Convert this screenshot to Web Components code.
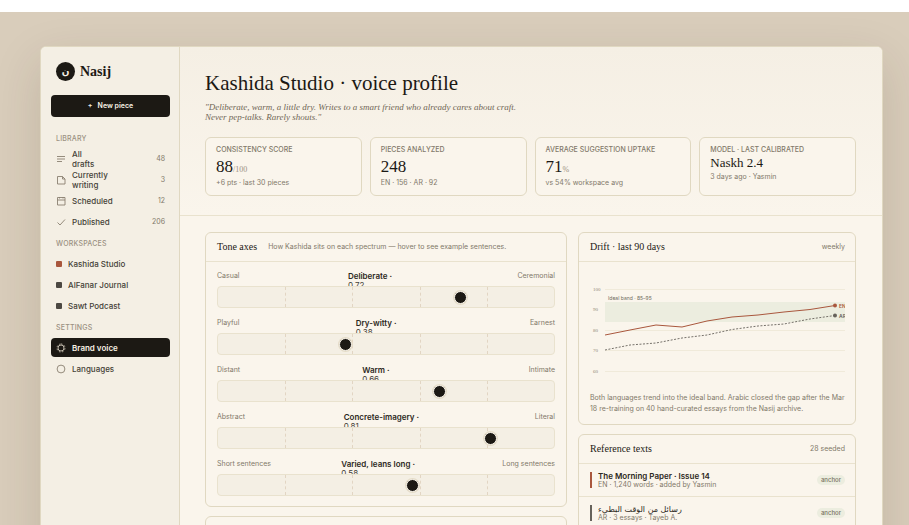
<!DOCTYPE html>
<html lang="en">
<head>
<meta charset="utf-8">
<title>Nasij · Brand voice</title>
<style>
  :root {
    --ink: #1c1914; --text: #453f37; --muted: #82796a; --faint: #9b9182;
    --paper: #faf5ec; --cream: #f4efe4; --line: #e0d8c1; --line-soft: #e9e2ce;
    --rust: #a9573d; --slate: #66625b; --sage: #eceddf;
    --serif: "Liberation Serif", "Times New Roman", serif;
  }
  html { background: #fff; }
  body { margin: 0; font: 8px/10px Inter, "DejaVu Sans", sans-serif; color: var(--text); }
</style>
</head>
<body>
<voice-app></voice-app>
<script>
function define(name, html, setup) {
  const template = document.createElement('template');
  template.innerHTML = html;
  customElements.define(name, class extends HTMLElement {
    connectedCallback() {
      if (this.shadowRoot) return;
      const root = this.attachShadow({ mode: 'open' });
      root.append(template.content.cloneNode(true));
      if (setup) setup(this, root);
    }
  });
}

const icons = {
  lines: '<path d="M1 2.5h8M1 5h8M1 7.5h5"/>',
  page: '<path d="M1.5 1.5h5l2.500 2.500v5h-7.500zM6.500 1.500v2.500h2.500"/>',
  calendar: '<path d="M1.500 1.500h7.500v7.500h-7.500zM1.500 4h7.500M3.500 1v1.500M7 1v1.500"/>',
  check: '<path d="M1.500 5.500l2.500 2.500 5-5.500"/>',
  gear: '<circle cx="5" cy="5" r="3"/><path stroke-dasharray="1.500 1.720" d="M5 1a4 4 0 1 1 0 8a4 4 0 1 1 0-8"/>',
  ring: '<circle cx="5" cy="5" r="3.900"/>'
};

define('nav-item', `
<style>
  :host { display: block; }
  a { display: flex; align-items: center; gap: 6px; height: 19px; padding: 0 5px; border-radius: 4px;
      color: var(--text); text-decoration: none; font-weight: 500; box-sizing: border-box; }
  svg { width: 10px; height: 10px; flex: none; fill: none; stroke: #8a8070; stroke-width: .9; }
  .dot { width: 6px; height: 6px; border-radius: 1px; flex: none; background: var(--dot, #4c4842); }
  .count { margin-left: auto; font-size: 7px; font-weight: 400; color: var(--muted); }
  :host([current]) a { background: var(--ink); color: #f8f1e5; font-weight: 600; }
  :host([current]) svg { stroke: #cfc7b8; }
</style>
<a href="#"><span class="icon" style="display:contents"></span><span class="label"><slot></slot></span><span class="count"></span></a>`,
(host, root) => {
  const icon = host.getAttribute('icon');
  root.querySelector('.icon').innerHTML = icon ? `<svg viewBox="0 0 10 10" aria-hidden="true">${icons[icon]}</svg>` : '<span class="dot"></span>';
  const count = host.getAttribute('count');
  if (count) root.querySelector('.count').textContent = count;
  else root.querySelector('.count').remove();
  if (host.hasAttribute('current')) root.querySelector('a').setAttribute('aria-current', 'page');
});

define('nav-group', `
<style>
  :host { display: block; }
  h2 { margin: 0 0 6px; padding: 0 5px; font-size: 7px; line-height: 8px; font-weight: 500; letter-spacing: .03em; text-transform: uppercase; color: var(--faint); }
  div { display: flex; flex-direction: column; gap: 2px; }
</style>
<h2></h2><div><slot></slot></div>`,
(host, root) => { root.querySelector('h2').textContent = host.getAttribute('heading'); });

define('side-bar', `
<style>
  :host { display: block; padding: 15px 9px 15px 10px; background: var(--cream); border-right: 1px solid var(--line); }
  .brand { display: flex; align-items: center; gap: 5px; padding: 0 5px; margin-bottom: 14px; }
  .logo { width: 19px; height: 19px; border-radius: 50%; background: var(--ink); color: #f8f1e5; display: grid; place-items: center; font: 700 9px/12px "DejaVu Sans", sans-serif; }
  .name { font: 700 14px/18px var(--serif); color: var(--ink); }
  button { display: block; width: 100%; height: 22px; border: 0; border-radius: 4px; background: var(--ink); color: #f8f1e5; font: 600 7px/10px Inter, sans-serif; margin: 0 0 18px; padding: 0; }
  button span { margin-right: 5px; }
  nav { display: flex; flex-direction: column; gap: 9px; }
</style>
<div class="brand"><span class="logo" lang="ar">ن</span><span class="name">Nasij</span></div>
<button type="button"><span>+</span>New piece</button>
<nav>
  <nav-group heading="Library">
    <nav-item icon="lines" count="48">All<br>drafts</nav-item>
    <nav-item icon="page" count="3">Currently<br>writing</nav-item>
    <nav-item icon="calendar" count="12">Scheduled</nav-item>
    <nav-item icon="check" count="206">Published</nav-item>
  </nav-group>
  <nav-group heading="Workspaces">
    <nav-item style="--dot: var(--rust)">Kashida Studio</nav-item>
    <nav-item>AlFanar Journal</nav-item>
    <nav-item>Sawt Podcast</nav-item>
  </nav-group>
  <nav-group heading="Settings">
    <nav-item icon="gear" current>Brand voice</nav-item>
    <nav-item icon="ring">Languages</nav-item>
  </nav-group>
</nav>`);

define('stat-card', `
<style>
  :host { display: block; box-sizing: border-box; min-height: 59px; padding: 8px 10px; border: 1px solid var(--line); border-radius: 6px; background: var(--paper); }
  .label { font-size: 7px; line-height: 8px; font-weight: 500; text-transform: uppercase; color: var(--muted); white-space: nowrap; }
  .value { margin: 4px 0 2px; font: 17px/18px var(--serif); color: var(--ink); }
  .value small { font-size: 8px; line-height: 8px; color: var(--faint); }
  :host([text]) .value { margin: 1px 0; font-size: 13px; line-height: 16px; }
  .note { font-size: 7px; line-height: 9px; color: var(--muted); }
</style>
<div class="label"></div><div class="value"><slot></slot><small></small></div><div class="note"></div>`,
(host, root) => {
  root.querySelector('.label').textContent = host.getAttribute('label');
  root.querySelector('small').textContent = host.getAttribute('unit') || '';
  root.querySelector('.note').textContent = host.getAttribute('note');
});

define('panel-card', `
<style>
  :host { display: block; border: 1px solid var(--line); border-radius: 6px; background: var(--paper); }
  header { display: flex; align-items: center; gap: 11px; height: 28px; padding: 0 10px 0 11px; border-bottom: 1px solid var(--line-soft); }
  h2 { margin: 0; font: 10px/12px var(--serif); color: var(--ink); }
  .side { font-size: 7px; color: var(--muted); }
  :host([end]) .side { margin-left: auto; }
</style>
<header><h2></h2><span class="side"></span></header><slot></slot>`,
(host, root) => {
  root.querySelector('h2').textContent = host.getAttribute('heading');
  root.querySelector('.side').textContent = host.getAttribute('side');
});

define('tone-axis', `
<style>
  :host { display: block; }
  .ends { display: flex; justify-content: space-between; height: 15px; font-size: 7px; color: var(--muted); }
  label { color: var(--text); font-size: 8px; line-height: 9px; }
  label strong { display: block; padding-right: 17px; font-weight: 600; line-height: 10px; color: #2c2822; }
  .stack { position: relative; display: grid; height: 20px; border: 1px solid var(--line-soft); border-radius: 4px; background: var(--cream); }
  .cells, input { grid-area: 1 / 1; }
  .cells { display: grid; grid-template-columns: repeat(5, 1fr); }
  .cells i + i { border-left: 1px dashed #e2d5c3; }
  input { appearance: none; margin: 0 -7px; height: 20px; background: none; }
  input::-webkit-slider-thumb { appearance: none; width: 13px; height: 13px; border-radius: 50%; box-sizing: border-box; background: var(--ink); border: 1px solid #faf5ec; box-shadow: 0 0 0 1px #e5dcc8; }
</style>
<div class="ends"><span class="low"></span><label for="tone"><strong></strong><span class="num"></span></label><span class="high"></span></div>
<div class="stack"><div class="cells"><i></i><i></i><i></i><i></i><i></i></div><input id="tone" type="range" min="0" max="1" step="0.01"></div>`,
(host, root) => {
  const value = host.getAttribute('value');
  root.querySelector('.low').textContent = host.getAttribute('low');
  root.querySelector('.high').textContent = host.getAttribute('high');
  root.querySelector('strong').textContent = host.getAttribute('tone') + ' ·';
  root.querySelector('.num').textContent = value;
  root.querySelector('input').value = value;
});

define('drift-chart', `
<style>
  :host { display: block; padding: 11px 10px 10px 11px; }
  svg { display: block; width: 100%; }
  text { font-family: Inter, sans-serif; }
  .axis text { font: 5px var(--serif); fill: #8f8575; }
  p { margin: 11px 0 0; font-size: 7px; line-height: 11px; color: var(--muted); }
</style>
<svg viewBox="0 0 255 108" role="img" aria-label="Weekly drift for English and Arabic">
  <rect x="15" y="29" width="240" height="20" fill="#eceddf"/>
  <g class="axis">
    <path d="M15 16.500h240M15 57.500h240M15 77.500h240M15 98.500h240" stroke="#f0eada" fill="none"/>
    <text x="3" y="18">100</text><text x="3" y="38">90</text><text x="3" y="59">80</text><text x="3" y="79">70</text><text x="3" y="100">60</text>
  </g>
  <text x="18" y="27" font-size="5" fill="#6f6b5c">Ideal band · 85–95</text>
  <polyline points="15,62 40,57 66,52 92,54 117,48 142,44 168,42 194,39 220,36.500 245,32.500" fill="none" stroke="#a9573d"/>
  <polyline points="15,77 40,72 66,70 92,65 117,62 142,56.500 168,53 194,51 220,46 245,42.500" fill="none" stroke="#66625b" stroke-dasharray="2 1.500" stroke-width=".9"/>
  <circle cx="245" cy="32.500" r="2" fill="#a9573d"/><circle cx="245" cy="42.500" r="2" fill="#66625b"/>
  <text x="249" y="34.500" font-size="5" font-weight="600" fill="#a9573d">EN</text><text x="249" y="44.500" font-size="5" font-weight="600" fill="#66625b">AR</text>
</svg>
<p><slot></slot></p>`);

define('reference-row', `
<style>
  :host { display: flex; align-items: center; gap: 6px; height: 32px; padding: 0 10px 0 11px; border-bottom: 1px solid var(--line-soft); }
  .bar { width: 2px; height: 16px; background: var(--bar, var(--slate)); }
  .title { font-weight: 600; line-height: 9px; color: #2c2822; }
  .title ::slotted([lang="ar"]) { font: 400 8px/9px "DejaVu Sans", sans-serif; }
  .meta { font-size: 7px; line-height: 8px; color: var(--muted); }
  .tag { margin-left: auto; padding: 0 4px; border-radius: 5px; background: var(--sage); font-size: 6px; line-height: 10px; font-weight: 500; color: #777060; }
</style>
<span class="bar"></span><div><div class="title"><slot></slot></div><div class="meta"></div></div><span class="tag">anchor</span>`,
(host, root) => { root.querySelector('.meta').textContent = host.getAttribute('meta'); });

define('voice-app', `
<style>
  :host { display: block; box-sizing: border-box; height: calc(100vh - 12px); margin-top: 12px; padding: 34px 26px 0 40px; overflow: hidden; background: #d9cdbb; }
  .window { display: grid; grid-template-columns: 139px 1fr; min-height: 100vh; border: 1px solid var(--line); border-radius: 6px; background: var(--paper); box-shadow: 0 16px 48px rgb(60 45 30 / .15); overflow: hidden; }
  .intro { padding: 22px 26px 19px 25px; border-bottom: 1px solid var(--line-soft); background: linear-gradient(#f5efe4, #faf5ec); }
  h1 { margin: 0; font: 21px/28px var(--serif); color: var(--ink); }
  .quote { margin: 5px 0 15px; font: italic 9px/10px var(--serif); color: #716756; }
  .stats { display: grid; grid-template-columns: repeat(4, 1fr); gap: 8px; }
  .panels { display: grid; grid-template-columns: 362fr 278fr; gap: 11px; align-items: start; padding: 16px 26px 16px 25px; }
  .column { display: grid; gap: 9px; min-width: 0; }
  .axes { display: grid; gap: 10px; padding: 9px 11px 10px; }
</style>
<div class="window">
  <side-bar></side-bar>
  <main>
    <section class="intro">
      <h1>Kashida Studio · voice profile</h1>
      <p class="quote">"Deliberate, warm, a little dry. Writes to a smart friend who already cares about craft.<br>Never pep-talks. Rarely shouts."</p>
      <div class="stats">
        <stat-card label="Consistency score" unit="/100" note="+6 pts · last 30 pieces">88</stat-card>
        <stat-card label="Pieces analyzed" note="EN · 156 · AR · 92">248</stat-card>
        <stat-card label="Average suggestion uptake" unit="%" note="vs 54% workspace avg">71</stat-card>
        <stat-card text label="Model · last calibrated" note="3 days ago · Yasmin">Naskh 2.4</stat-card>
      </div>
    </section>
    <section class="panels">
      <div class="column">
        <panel-card heading="Tone axes" side="How Kashida sits on each spectrum — hover to see example sentences.">
          <div class="axes">
            <tone-axis low="Casual" tone="Deliberate" value="0.72" high="Ceremonial"></tone-axis>
            <tone-axis low="Playful" tone="Dry-witty" value="0.38" high="Earnest"></tone-axis>
            <tone-axis low="Distant" tone="Warm" value="0.66" high="Intimate"></tone-axis>
            <tone-axis low="Abstract" tone="Concrete-imagery" value="0.81" high="Literal"></tone-axis>
            <tone-axis low="Short sentences" tone="Varied, leans long" value="0.58" high="Long sentences"></tone-axis>
          </div>
        </panel-card>
        <panel-card heading="" side=""></panel-card>
      </div>
      <div class="column">
        <panel-card end heading="Drift · last 90 days" side="weekly">
          <drift-chart>Both languages trend into the ideal band. Arabic closed the gap after the Mar 18 re-training on 40 hand-curated essays from the Nasij archive.</drift-chart>
        </panel-card>
        <panel-card end heading="Reference texts" side="28 seeded">
          <reference-row style="--bar: var(--rust)" meta="EN · 1,240 words · added by Yasmin">The Morning Paper · Issue 14</reference-row>
          <reference-row meta="AR · 3 essays · Tayeb A."><span lang="ar">رسائل من الوقت البطيء</span></reference-row>
        </panel-card>
      </div>
    </section>
  </main>
</div>`);
</script>
</body>
</html>
